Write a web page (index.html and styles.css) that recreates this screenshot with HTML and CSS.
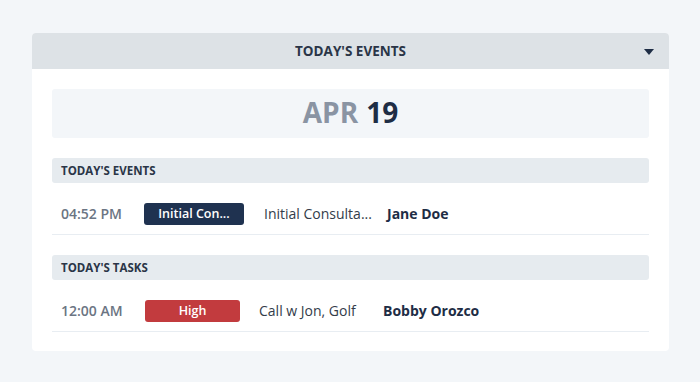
FILE: index.html
```html
<!DOCTYPE html>
<html lang="en">
<head>
    <meta charset="UTF-8">
    <meta name="viewport" content="width=device-width, initial-scale=1.0">
    <title>Today's Events</title>
    <link rel="stylesheet" href="styles.css">
</head>
<body>
    <div class="panel">
        <div class="panel-header">
            <span>TODAY'S EVENTS</span>
            <svg class="caret" width="10" height="6" viewBox="0 0 10 6"><path d="M0 0h10L5 6z" fill="#1e2d45"/></svg>
        </div>
        <div class="panel-body">
            <div class="date-box"><span class="month">APR</span> <span class="day">19</span></div>

            <div class="section-title">TODAY'S EVENTS</div>
            <div class="row events">
                <span class="time">04:52 PM</span>
                <span class="badge navy">Initial Con...</span>
                <span class="desc">Initial Consulta...</span>
                <span class="name">Jane Doe</span>
            </div>

            <div class="section-title">TODAY'S TASKS</div>
            <div class="row tasks">
                <span class="time">12:00 AM</span>
                <span class="badge red">High</span>
                <span class="desc">Call w Jon, Golf</span>
                <span class="name">Bobby Orozco</span>
            </div>
        </div>
    </div>
</body>
</html>
```

FILE: styles.css
```css
* {
    margin: 0;
    padding: 0;
    box-sizing: border-box;
}

body {
    font-family: 'Open Sans', 'Liberation Sans', sans-serif;
    background: #f3f6f9;
    padding: 33px 31px 0 32px;
    color: #1e2d45;
}

.panel {
    background: #fff;
    border-radius: 4px;
    overflow: hidden;
}

.panel-header {
    position: relative;
    height: 36px;
    background: #dde2e6;
    display: flex;
    align-items: center;
    justify-content: center;
    font-size: 13.5px;
    font-weight: 700;
    color: #2a3547;
}

.caret {
    position: absolute;
    right: 15px;
    top: 16px;
}

.panel-body {
    padding: 20px 20px 19px 20px;
}

.date-box {
    height: 49px;
    padding-bottom: 3px;
    background: #f3f6f9;
    border-radius: 3px;
    display: flex;
    align-items: center;
    justify-content: center;
    gap: 8px;
    font-size: 28px;
    font-weight: 700;
    margin-bottom: 20px;
}

.month {
    color: #8a94a3;
}

.day {
    color: #1e2d45;
}

.section-title {
    height: 25px;
    line-height: 25px;
    background: #e6ebef;
    border-radius: 3px;
    padding-left: 9px;
    font-size: 11.5px;
    font-weight: 700;
    color: #2a3547;
}

.row {
    height: 52px;
    display: flex;
    align-items: center;
    padding: 10px 0 0 9px;
    border-bottom: 1px solid #e8edf2;
    font-size: 14px;
    margin-bottom: 20px;
}

.row:last-child {
    margin-bottom: 0;
}

.time {
    color: #6b7583;
    font-weight: 600;
    font-size: 14px;
}

.badge {
    height: 22px;
    line-height: 22px;
    border-radius: 3px;
    color: #fff;
    font-weight: 600;
    font-size: 12.5px;
    text-align: center;
    white-space: nowrap;
}

.badge.navy {
    background: #1f3250;
}

.badge.red {
    background: #c23b3e;
}

.desc {
    color: #333c4a;
    white-space: nowrap;
}

.name {
    font-weight: 700;
    color: #1e2d45;
}

.events .time { width: 83px; }
.events .badge { width: 100px; margin-right: 20px; }
.events .desc { width: 123px; }

.tasks .time { width: 84px; }
.tasks .badge { width: 95px; margin-right: 19px; }
.tasks .desc { width: 124px; }
```
